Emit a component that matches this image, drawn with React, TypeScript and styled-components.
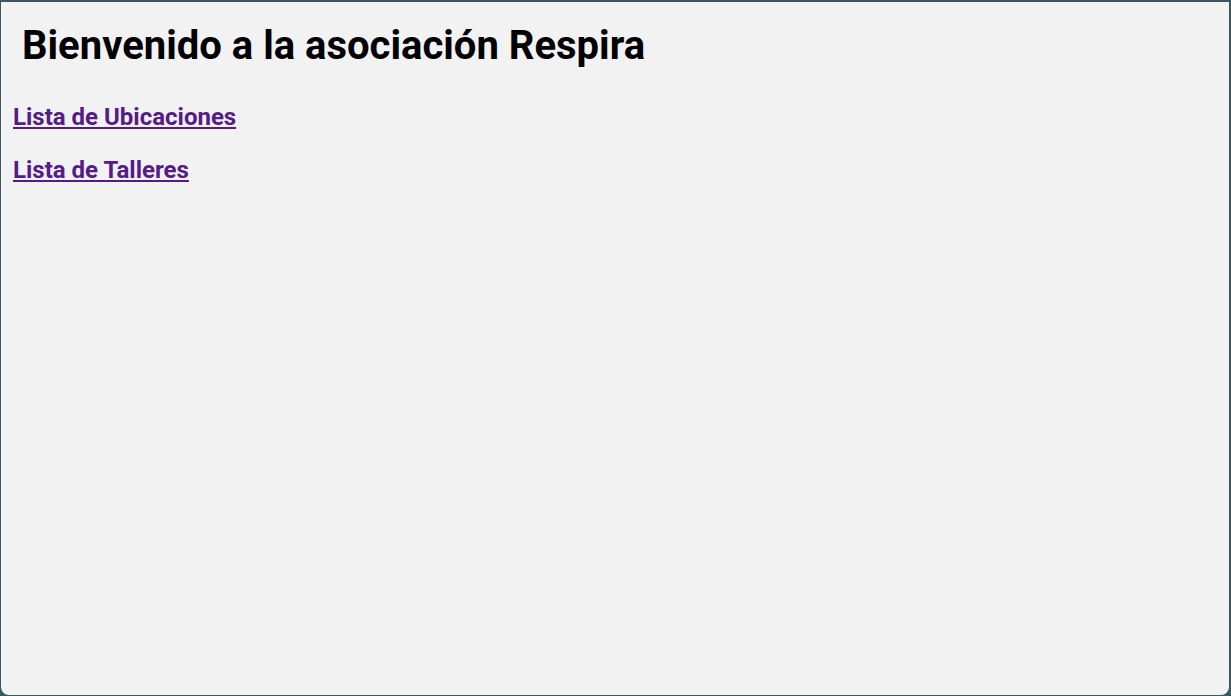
import styled, { createGlobalStyle } from "styled-components";

const GlobalStyle = createGlobalStyle`
  html, body {
    margin: 0;
    padding: 0;
    background: #3b5860;
  }
  #root {
    height: 696px;
  }
`;

const Frame = styled.div`
  box-sizing: border-box;
  width: 1231px;
  height: 696px;
  padding: 2px 2px 1px 1px;
  display: flex;
`;

const Page = styled.main`
  flex: 1;
  background: #f2f2f2;
  border-radius: 0 0 8px 8px;
  font-family: Roboto, "Liberation Sans", sans-serif;
  padding: 0 12px;
`;

const Title = styled.h1`
  margin: 20px 0 0 9px;
  font-size: 40px;
  font-weight: 700;
  line-height: 48px;
  color: #000;
`;

const Nav = styled.nav`
  display: flex;
  flex-direction: column;
  align-items: flex-start;
  gap: 24px;
  margin-top: 33px;
`;

const NavLink = styled.a`
  font-size: 24px;
  font-weight: 700;
  line-height: 29px;
  color: #551a8b;
  text-decoration: underline;
`;

export default function App() {
  return (
    <>
      <GlobalStyle />
      <Frame>
        <Page>
          <Title>Bienvenido a la asociación Respira</Title>
          <Nav>
            <NavLink href="#ubicaciones">Lista de Ubicaciones</NavLink>
            <NavLink href="#talleres">Lista de Talleres</NavLink>
          </Nav>
        </Page>
      </Frame>
    </>
  );
}
